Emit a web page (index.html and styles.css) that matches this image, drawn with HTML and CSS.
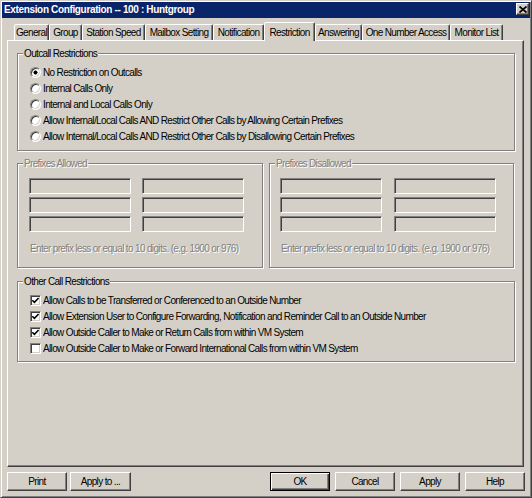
FILE: index.html
```html
<!DOCTYPE html>
<html>
<head>
<meta charset="utf-8">
<title>Extension Configuration</title>
<link rel="stylesheet" href="styles.css">
</head>
<body>
<div class="window">
  <div class="titlebar">
    <span class="title">Extension Configuration -- 100 : Huntgroup</span>
    <span class="close"><svg width="8" height="7" viewBox="0 0 8 7"><path d="M0.5 0.5 L7.5 6.5 M7.5 0.5 L0.5 6.5" stroke="#000" stroke-width="1.7" fill="none"/></svg></span>
  </div>
  <div class="tabs">
    <div class="tab t-general">General</div>
    <div class="tab t-group">Group</div>
    <div class="tab t-station">Station Speed</div>
    <div class="tab t-mailbox">Mailbox Setting</div>
    <div class="tab t-notif">Notification</div>
    <div class="tab active t-restr">Restriction</div>
    <div class="tab t-answer">Answering</div>
    <div class="tab t-onenum">One Number Access</div>
    <div class="tab t-monitor">Monitor List</div>
  </div>
  <div class="panel">
    <fieldset class="group outcall">
      <legend>Outcall Restrictions</legend>
      <div class="body">
        <div class="opt"><span class="radio checked"></span>No Restriction on Outcalls</div>
        <div class="opt"><span class="radio"></span>Internal Calls Only</div>
        <div class="opt"><span class="radio"></span>Internal and Local Calls Only</div>
        <div class="opt"><span class="radio"></span>Allow Internal/Local Calls AND Restrict Other Calls by Allowing Certain Prefixes</div>
        <div class="opt"><span class="radio"></span>Allow Internal/Local Calls AND Restrict Other Calls by Disallowing Certain Prefixes</div>
      </div>
    </fieldset>
    <div class="prefix-row">
      <fieldset class="group prefix allowed">
        <legend class="disabled">Prefixes Allowed</legend>
        <div class="body">
          <div class="boxes">
            <span class="field"></span><span class="field"></span>
            <span class="field"></span><span class="field"></span>
            <span class="field"></span><span class="field"></span>
          </div>
          <div class="hint">Enter prefix less or equal to 10 digits. (e.g. 1900 or 976)</div>
        </div>
      </fieldset>
      <fieldset class="group prefix disallowed">
        <legend class="disabled">Prefixes Disallowed</legend>
        <div class="body">
          <div class="boxes">
            <span class="field"></span><span class="field"></span>
            <span class="field"></span><span class="field"></span>
            <span class="field"></span><span class="field"></span>
          </div>
          <div class="hint">Enter prefix less or equal to 10 digits. (e.g. 1900 or 976)</div>
        </div>
      </fieldset>
    </div>
    <fieldset class="group other">
      <legend>Other Call Restrictions</legend>
      <div class="body">
        <div class="opt"><span class="check"><svg width="9" height="9" viewBox="0 0 9 9"><path d="M1.3 4.2 L3.4 6.3 L7.6 2" stroke="#000" stroke-width="1.6" fill="none"/></svg></span>Allow Calls to be Transferred or Conferenced to an Outside Number</div>
        <div class="opt"><span class="check"><svg width="9" height="9" viewBox="0 0 9 9"><path d="M1.3 4.2 L3.4 6.3 L7.6 2" stroke="#000" stroke-width="1.6" fill="none"/></svg></span>Allow Extension User to Configure Forwarding, Notification and Reminder Call to an Outside Number</div>
        <div class="opt"><span class="check"><svg width="9" height="9" viewBox="0 0 9 9"><path d="M1.3 4.2 L3.4 6.3 L7.6 2" stroke="#000" stroke-width="1.6" fill="none"/></svg></span>Allow Outside Caller to Make or Return Calls from within VM System</div>
        <div class="opt"><span class="check"></span>Allow Outside Caller to Make or Forward International Calls from within VM System</div>
      </div>
    </fieldset>
  </div>
  <div class="buttons">
    <div class="btn-group left">
      <button class="btn">Print</button>
      <button class="btn wide">Apply to ...</button>
    </div>
    <div class="btn-group right">
      <button class="btn default">OK</button>
      <button class="btn">Cancel</button>
      <button class="btn">Apply</button>
      <button class="btn">Help</button>
    </div>
  </div>
</div>
</body>
</html>
```
FILE: styles.css
```css
* { box-sizing: border-box; }
html, body { margin: 0; padding: 0; }
body {
  background: #d4d0c8;
  font-family: "Liberation Sans", Arial, sans-serif;
  font-size: 10px;
  letter-spacing: -0.65px;
  color: #000;
}
.window {
  width: 532px;
  height: 498px;
  background: #d4d0c8;
  border: 1px solid;
  border-color: #d4d0c8 #404040 #404040 #d4d0c8;
  box-shadow: inset 1px 1px #fff, inset -1px -1px #808080;
  padding: 1px;
  display: flex;
  flex-direction: column;
}
.titlebar {
  height: 16px;
  flex: none;
  background: #0a246a;
  display: flex;
  align-items: flex-start;
  justify-content: space-between;
}
.title {
  color: #fff;
  font-weight: bold;
  letter-spacing: -0.35px;
  line-height: 16px;
  padding-left: 2px;
  white-space: nowrap;
}
.close {
  width: 13px;
  height: 12px;
  margin: 1px 1px 0 0;
  background: #d4d0c8;
  border: 1px solid;
  border-color: #fff #404040 #404040 #fff;
  box-shadow: inset -1px -1px #808080;
  display: flex;
  align-items: center;
  justify-content: center;
}
.close svg { display: block; }

.tabs {
  display: flex;
  align-items: flex-end;
  height: 18px;
  flex: none;
  margin-top: 4px;
  padding-left: 12px;
}
.tab {
  height: 16px;
  border: 1px solid;
  border-bottom: none;
  border-color: #fff #404040 transparent #fff;
  border-radius: 2px 2px 0 0;
  box-shadow: inset -1px 0 #808080;
  text-align: center;
  line-height: 15px;
  white-space: nowrap;
  background: #d4d0c8;
}
.tab.active {
  height: 19px;
  margin-bottom: -1px;
  padding-top: 2px;
  position: relative;
  z-index: 1;
}
.t-general { width: 35px; }
.t-group { width: 33px; }
.t-station { width: 63px; }
.t-mailbox { width: 68px; }
.t-notif { width: 51px; }
.t-restr { width: 51px; }
.t-answer { width: 47px; }
.t-onenum { width: 88px; }
.t-monitor { width: 53px; }

.panel {
  flex: none;
  margin: 0 6px 0 5px;
  height: 427px;
  border: 1px solid;
  border-color: #fff #404040 #404040 #fff;
  box-shadow: inset -1px -1px #808080;
  padding: 0 8px 0 9px;
  display: flex;
  flex-direction: column;
}

.group {
  margin: 0;
  padding: 0;
  min-width: 0;
  border: 1px solid #808080;
  box-shadow: inset 1px 1px #fff, 1px 1px #fff;
}
.group legend {
  margin-left: 5px;
  padding: 0 1px;
  line-height: 11px;
  background: #d4d0c8;
  white-space: nowrap;
}
.disabled, .hint {
  color: #808080;
  text-shadow: 1px 1px 0 #fff;
}

.outcall { margin-top: 7px; }
.outcall .body { padding: 5px 0 6px 12px; }

.opt {
  display: flex;
  align-items: center;
  height: 16px;
  white-space: nowrap;
}
.radio {
  flex: none;
  width: 11px;
  height: 11px;
  margin-right: 2px;
  border-radius: 50%;
  border: 1px solid;
  border-color: #808080 #fff #fff #808080;
  box-shadow: inset 1px 1px #404040, inset -1px -1px #d4d0c8;
  background: #fff;
}
.radio.checked {
  background: radial-gradient(circle at 50% 50%, #000 0 1.8px, #fff 2.3px);
}
.check {
  flex: none;
  width: 11px;
  height: 11px;
  margin-right: 2px;
  border: 1px solid;
  border-color: #808080 #fff #fff #808080;
  box-shadow: inset 1px 1px #404040, inset -1px -1px #d4d0c8;
  background: #fff;
  display: flex;
  align-items: center;
  justify-content: center;
}
.check svg { display: block; }

.prefix-row {
  display: flex;
  gap: 6px;
  margin-top: 7px;
}
.allowed { width: 246px; }
.disallowed { width: 245px; }
.prefix .body { padding: 9px 0 12px 11px; }
.disallowed .body { padding-left: 10px; }
.boxes {
  display: grid;
  grid-template-columns: 102px 102px;
  column-gap: 11px;
  row-gap: 3px;
}
.disallowed .boxes { column-gap: 12px; }
.field {
  display: block;
  height: 16px;
  border: 1px solid;
  border-color: #808080 #fff #fff #808080;
  box-shadow: inset 1px 1px #404040, inset -1px -1px #d4d0c8;
}
.hint {
  margin-top: 11px;
  line-height: 12px;
  white-space: nowrap;
  padding-left: 1px;
}

.other { margin-top: 8px; }
.other .body { padding: 5px 0 5px 12px; }

.buttons {
  flex: none;
  display: flex;
  justify-content: space-between;
  margin-top: 5px;
  padding: 0 5px;
}
.btn-group { display: flex; }
.btn-group.left { gap: 3px; }
.btn-group.right { gap: 5px; }
.btn {
  width: 60px;
  height: 19px;
  margin: 0;
  padding: 0;
  font: inherit;
  letter-spacing: inherit;
  color: #000;
  background: #d4d0c8;
  border: 1px solid;
  border-color: #fff #404040 #404040 #fff;
  box-shadow: inset -1px -1px #808080;
  display: flex;
  align-items: center;
  justify-content: center;
  white-space: nowrap;
}
.btn.wide { width: 61px; }
.btn.default {
  border-color: #000;
  box-shadow: inset 1px 1px #fff, inset -1px -1px #404040, inset -2px -2px #808080;
}
```
